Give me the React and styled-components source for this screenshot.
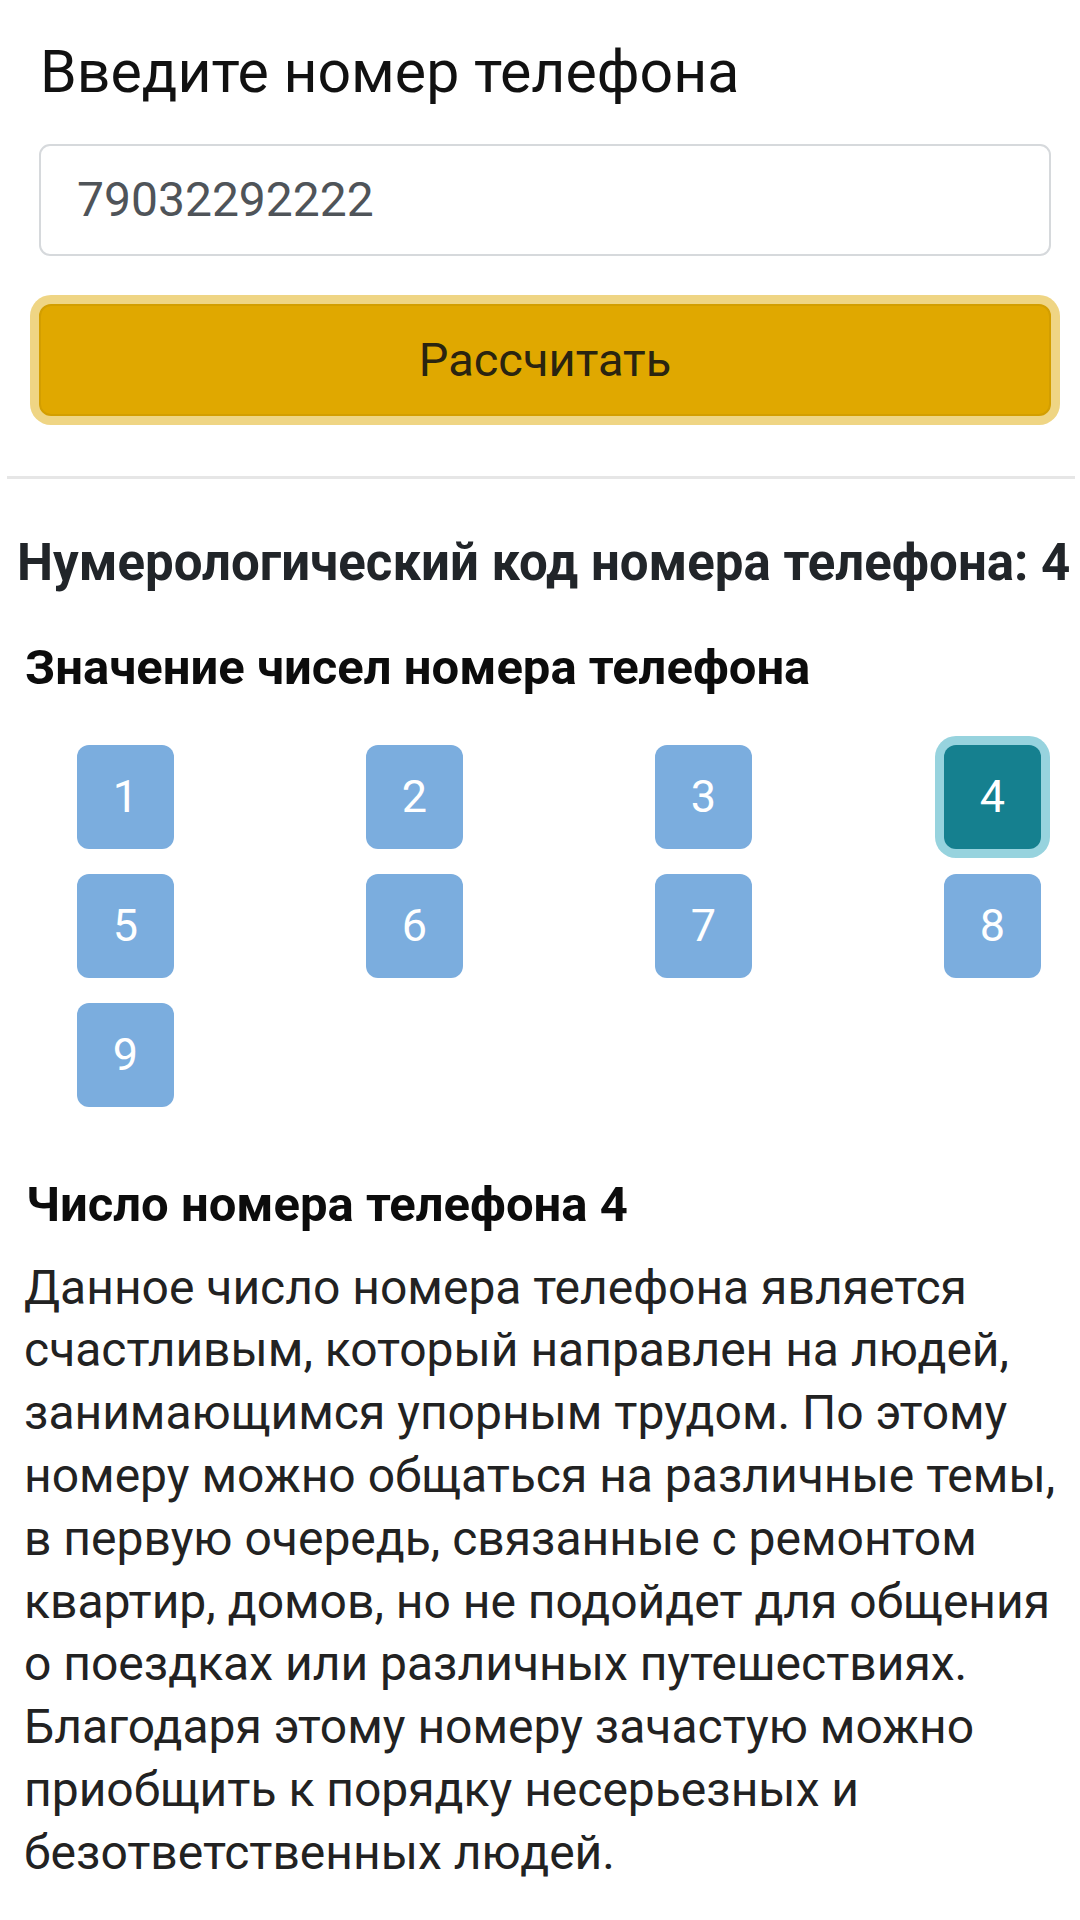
import React from "react";
import styled, { createGlobalStyle, css } from "styled-components";

const GlobalStyle = createGlobalStyle`
  html, body {
    margin: 0;
    padding: 0;
    background: #ffffff;
  }
  body {
    font-family: Roboto, "Noto Sans", "Liberation Sans", sans-serif;
    color: #212529;
    -webkit-font-smoothing: antialiased;
  }
  * { box-sizing: border-box; }
`;

const Page = styled.div`
  width: 1080px;
  padding: 0 5px 60px 7px;
`;

const FormSection = styled.section`
  display: flex;
  flex-direction: column;
  padding: 37px 24px 0 32px;
`;

const Label = styled.label`
  font-size: 59px;
  line-height: 1.2;
  font-weight: 400;
  color: #111;
  padding-left: 1px;
`;

const PhoneInput = styled.input`
  margin-top: 36px;
  height: 112px;
  width: 100%;
  padding: 0 36px;
  font-family: inherit;
  font-size: 48px;
  color: #4f5459;
  background: #fff;
  border: 2px solid #d6d9dc;
  border-radius: 11px;
  outline: none;
`;

const CalcButton = styled.button`
  margin-top: 48px;
  height: 112px;
  width: 100%;
  font-family: inherit;
  font-size: 47px;
  color: #2a2410;
  background: #e0a800;
  border: 2px solid #d39e00;
  border-radius: 12px;
  box-shadow: 0 0 0 9px #efd584;
  cursor: pointer;
`;

const Divider = styled.hr`
  margin: 60px 0 0;
  border: 0;
  border-top: 3px solid #e6e6e6;
`;

const Results = styled.section`
  display: flex;
  flex-direction: column;
  padding: 0 0 0 10px;
`;

const CodeTitle = styled.h2`
  margin: 53px 0 0;
  font-size: 51px;
  line-height: 1.2;
  font-weight: 700;
  color: #212529;
  white-space: nowrap;
`;

const SubTitle = styled.h3`
  margin: ${(p) => p.$top}px 0 0;
  padding-left: ${(p) => p.$indent}px;
  font-size: 49px;
  line-height: 1.2;
  font-weight: 700;
  color: #0c0c0c;
`;

const Grid = styled.div`
  margin-top: 47px;
  padding: 0 34px 0 60px;
  display: grid;
  grid-template-columns: repeat(4, 97px);
  justify-content: space-between;
  row-gap: 25px;
`;

const NumBox = styled.div`
  width: 97px;
  height: 104px;
  border-radius: 12px;
  display: flex;
  align-items: center;
  justify-content: center;
  font-size: 45px;
  color: #ffffff;
  background: #7badde;
  ${(p) =>
    p.$active &&
    css`
      background: #15808f;
      box-shadow: 0 0 0 9px #97d3de;
    `}
`;

const Description = styled.p`
  margin: 22px 0 0;
  padding: 0 4px 0 7px;
  font-size: 48px;
  line-height: 62.8px;
  color: #222;
`;

const numbers = [1, 2, 3, 4, 5, 6, 7, 8, 9];
const code = 4;

export default function App() {
  return (
    <>
      <GlobalStyle />
      <Page>
        <FormSection>
          <Label htmlFor="phone">Введите номер телефона</Label>
          <PhoneInput id="phone" defaultValue="79032292222" />
          <CalcButton type="button">Рассчитать</CalcButton>
        </FormSection>
        <Divider />
        <Results>
          <CodeTitle>Нумерологический код номера телефона: {code}</CodeTitle>
          <SubTitle $top={46} $indent={8}>Значение чисел номера телефона</SubTitle>
          <Grid>
            {numbers.map((n) => (
              <NumBox key={n} $active={n === code}>
                {n}
              </NumBox>
            ))}
          </Grid>
          <SubTitle $top={69} $indent={9}>Число номера телефона {code}</SubTitle>
          <Description>
            Данное число номера телефона является счастливым, который направлен
            на людей, занимающимся упорным трудом. По этому номеру можно
            общаться на различные темы, в первую очередь, связанные с ремонтом
            квартир, домов, но не подойдет для общения о поездках или различных
            путешествиях. Благодаря этому номеру зачастую можно приобщить к
            порядку несерьезных и безответственных людей.
          </Description>
        </Results>
      </Page>
    </>
  );
}
